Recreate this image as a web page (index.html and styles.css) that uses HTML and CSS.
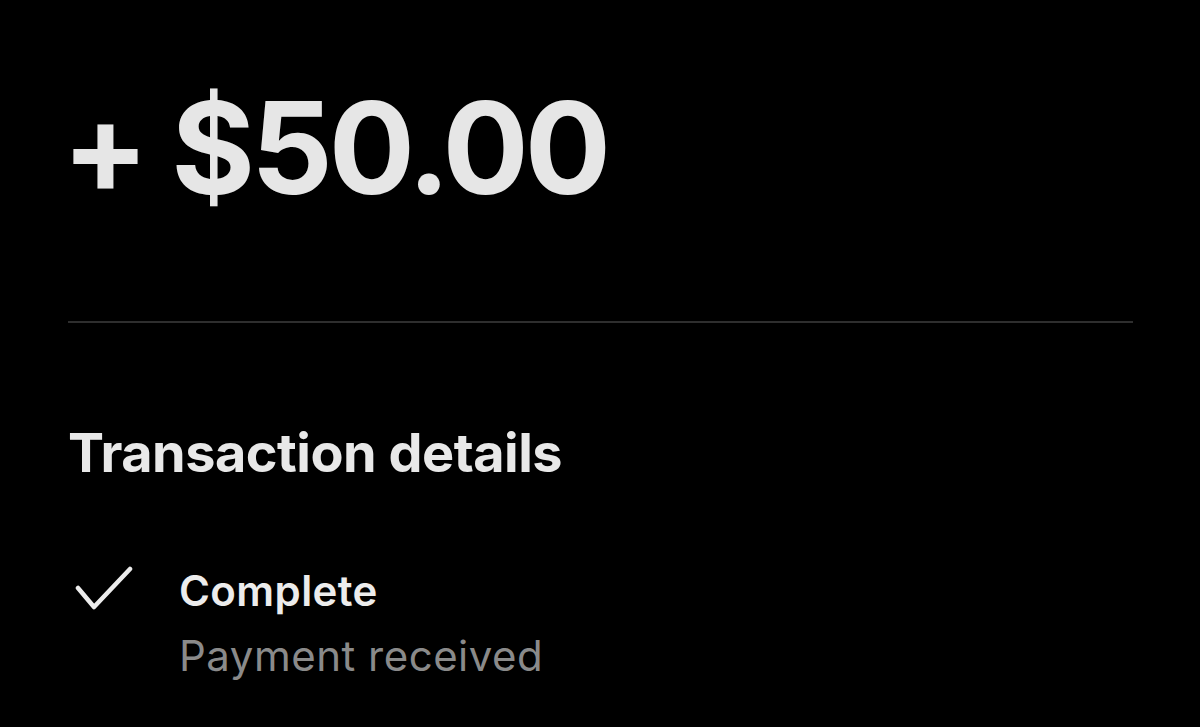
FILE: index.html
```html
<!DOCTYPE html>
<html lang="en">
<head>
<meta charset="utf-8">
<title>Transaction</title>
<link rel="stylesheet" href="styles.css">
</head>
<body>
<main class="screen">
  <p class="clipped">Transfer Jan 8, 2024 at 4:15PM, to your balance</p>
  <h1 class="amount">+ $50.00</h1>
  <hr class="divider">
  <h2 class="section-title">Transaction details</h2>
  <div class="status">
    <svg class="check" width="58" height="44" viewBox="0 0 58 44" aria-hidden="true">
      <path d="M3 22 L19 41 L55 3" fill="none" stroke="#ececec" stroke-width="4.5" stroke-linecap="round" stroke-linejoin="round"/>
    </svg>
    <div class="status-text">
      <div class="status-title">Complete</div>
      <div class="status-sub">Payment received</div>
    </div>
  </div>
</main>
</body>
</html>
```
FILE: styles.css
```css
html, body {
  margin: 0;
  padding: 0;
  background: #000;
  height: 100%;
  overflow: hidden;
}
.screen {
  padding: 0 67px 0 68px;
  font-family: Inter, "Noto Sans", sans-serif;
  color: #e6e6e6;
}
.clipped {
  margin: -43px 0 0 0;
  font-size: 34px;
  line-height: 40px;
  color: #bdbdbd;
  white-space: nowrap;
  padding-left: 32px;
}
.amount {
  margin: 81px 0 0 -6px;
  font-size: 128px;
  line-height: 140px;
  font-weight: 700;
  letter-spacing: -4px;
  color: #e6e6e6;
}
.divider {
  margin: 103px 0 0 0;
  border: 0;
  height: 2px;
  background: #2e2e2e;
}
.section-title {
  margin: 100px 0 0 0;
  font-size: 54px;
  line-height: 60px;
  font-weight: 700;
  letter-spacing: -0.5px;
  color: #e8e8e8;
}
.status {
  display: flex;
  gap: 46px;
  margin-top: 84px;
}
.check {
  margin-top: -1px;
  margin-left: 7px;
  flex: none;
}
.status-text {
  display: flex;
  flex-direction: column;
}
.status-title {
  font-size: 42px;
  line-height: 48px;
  font-weight: 600;
  letter-spacing: 0.4px;
  color: #ececec;
}
.status-sub {
  margin-top: 17px;
  font-size: 42px;
  line-height: 48px;
  font-weight: 400;
  letter-spacing: 0.5px;
  color: #8a8a8a;
}
```
